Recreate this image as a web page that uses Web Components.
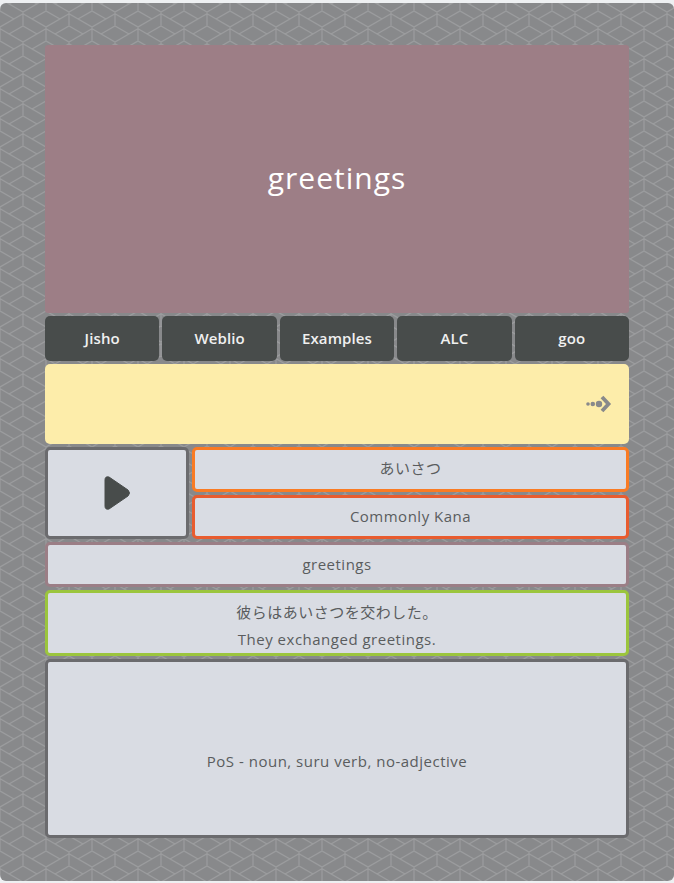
<!DOCTYPE html>
<html lang="ja">
<head>
<meta charset="utf-8">
<title>greetings</title>
<style>
  html, body { margin: 0; background: #eef0f2; }
  body { font-family: "Open Sans", "Noto Sans CJK JP", sans-serif; }
</style>
</head>
<body>
<card-page>
  <word-banner>greetings</word-banner>
  <link-bar>
    <link-button>Jisho</link-button>
    <link-button>Weblio</link-button>
    <link-button>Examples</link-button>
    <link-button>ALC</link-button>
    <link-button>goo</link-button>
  </link-bar>
  <note-box></note-box>
  <audio-row>
    <play-button></play-button>
    <info-panel slot="side" color="#f97b24" style="height:45px;padding-bottom:3px">あいさつ</info-panel>
    <info-panel slot="side" color="#e85c2f" style="height:44px;padding-bottom:1px">Commonly Kana</info-panel>
  </audio-row>
  <info-panel color="#9b7e86" style="height:45px">greetings</info-panel>
  <info-panel color="#9bc53d" style="height:66px;padding-top:5px">
    <div>彼らはあいさつを交わした。</div>
    <div>They exchanged greetings.</div>
  </info-panel>
  <info-panel color="#6b6b6e" style="height:179px;padding-top:26px">PoS - noun, suru verb, no-adjective</info-panel>
</card-page>

<script>
// one tile holds two arrow heads, the second shifted half a tile
const motif = (x, y) => `M${x - 23} ${y - 13.3} L${x} ${y} L${x + 23} ${y - 13.3} M${x - 14} ${y - 8} L${x} ${y - 16} L${x + 14} ${y - 8} M${x} ${y} V${y + 14}`;
const heads = [[23, 12], [23, 42], [0, 27], [46, 27], [0, -3], [46, -3]];
const TILE = "data:image/svg+xml," + encodeURIComponent(`
<svg xmlns="http://www.w3.org/2000/svg" width="46" height="30" viewBox="0 0 46 30">
  <path fill="none" stroke="#9b9c9e" stroke-width="1.2" d="${heads.map(h => motif(h[0], h[1])).join(' ')}"/>
</svg>`);

class CardPage extends HTMLElement {
  constructor() {
    super();
    this.attachShadow({mode: 'open'});
    this.shadowRoot.innerHTML = `
      <style>
        :host {
          display: flex;
          flex-direction: column;
          gap: 3px;
          margin-top: 3px;
          height: 878px;
          box-sizing: border-box;
          padding: 42px 45px 0;
          border-radius: 6px;
          background: #88898b url("${TILE}") 0 -3px;
          font-size: 15px;
          letter-spacing: .5px;
          color: #5a5c5e;
        }
      </style>
      <slot></slot>`;
  }
}
customElements.define('card-page', CardPage);

class WordBanner extends HTMLElement {
  constructor() {
    super();
    this.attachShadow({mode: 'open'});
    this.shadowRoot.innerHTML = `
      <style>
        :host {
          display: flex;
          align-items: center;
          justify-content: center;
          height: 268px;
          padding-bottom: 4px;
          box-sizing: border-box;
          border-radius: 3px;
          background: #9d7e86;
          color: #fff;
          font-size: 30px;
          letter-spacing: 1px;
        }
      </style>
      <slot></slot>`;
  }
}
customElements.define('word-banner', WordBanner);

class LinkBar extends HTMLElement {
  constructor() {
    super();
    this.attachShadow({mode: 'open'});
    this.shadowRoot.innerHTML = `
      <style>
        :host { display: grid; grid-template-columns: repeat(5, 1fr); gap: 3px; }
      </style>
      <slot></slot>`;
  }
}
customElements.define('link-bar', LinkBar);

class LinkButton extends HTMLElement {
  constructor() {
    super();
    this.attachShadow({mode: 'open'});
    this.shadowRoot.innerHTML = `
      <style>
        :host {
          display: flex;
          align-items: center;
          justify-content: center;
          height: 45px;
          padding-bottom: 1px;
          box-sizing: border-box;
          border-radius: 5px;
          background: #484c4b;
          color: #f0f0f0;
          font-weight: 600;
          letter-spacing: .1px;
        }
      </style>
      <slot></slot>`;
  }
}
customElements.define('link-button', LinkButton);

class NoteBox extends HTMLElement {
  constructor() {
    super();
    this.attachShadow({mode: 'open'});
    this.shadowRoot.innerHTML = `
      <style>
        :host {
          display: flex;
          align-items: center;
          justify-content: flex-end;
          height: 80px;
          padding-right: 17px;
          box-sizing: border-box;
          border-radius: 5px;
          background: #fdedaa;
        }
        svg { display: block; }
      </style>
      <svg width="26" height="18" viewBox="0 0 26 18">
        <g fill="#88898b">
          <circle cx="2" cy="9" r="1.8"/>
          <circle cx="6.8" cy="9" r="2.3"/>
          <circle cx="13" cy="9" r="3.2"/>
        </g>
        <path d="M16 2 L22.5 9 L16 16" fill="none" stroke="#88898b" stroke-width="3.8"/>
      </svg>`;
  }
}
customElements.define('note-box', NoteBox);

class AudioRow extends HTMLElement {
  constructor() {
    super();
    this.attachShadow({mode: 'open'});
    this.shadowRoot.innerHTML = `
      <style>
        :host { display: grid; grid-template-columns: 144px 1fr; gap: 3px; }
        .side { display: flex; flex-direction: column; gap: 3px; }
      </style>
      <slot></slot>
      <div class="side"><slot name="side"></slot></div>`;
  }
}
customElements.define('audio-row', AudioRow);

class PlayButton extends HTMLElement {
  constructor() {
    super();
    this.attachShadow({mode: 'open'});
    this.shadowRoot.innerHTML = `
      <style>
        :host {
          display: flex;
          align-items: center;
          justify-content: center;
          box-sizing: border-box;
          border: 3px solid #6b6b6e;
          border-radius: 5px;
          background: #d9dce3;
        }
        svg { display: block; margin-right: 0; }
      </style>
      <svg width="26" height="34" viewBox="0 0 26 34">
        <path d="M1 4 L1 30 Q1 34 5 33 L24 20 Q27 17 24 14 L5 1 Q1 0 1 4 Z" fill="#484c4b" stroke="#484c4b" stroke-linejoin="round"/>
      </svg>`;
  }
}
customElements.define('play-button', PlayButton);

class InfoPanel extends HTMLElement {
  constructor() {
    super();
    this.attachShadow({mode: 'open'});
    this.shadowRoot.innerHTML = `
      <style>
        :host {
          display: flex;
          flex-direction: column;
          align-items: center;
          justify-content: center;
          box-sizing: border-box;
          border: 3px solid var(--edge);
          border-radius: 5px;
          background: #d9dce3;
          line-height: 27px;
          text-align: center;
        }
      </style>
      <slot></slot>`;
  }
  connectedCallback() {
    this.style.setProperty('--edge', this.getAttribute('color'));
  }
}
customElements.define('info-panel', InfoPanel);
</script>
</body>
</html>
